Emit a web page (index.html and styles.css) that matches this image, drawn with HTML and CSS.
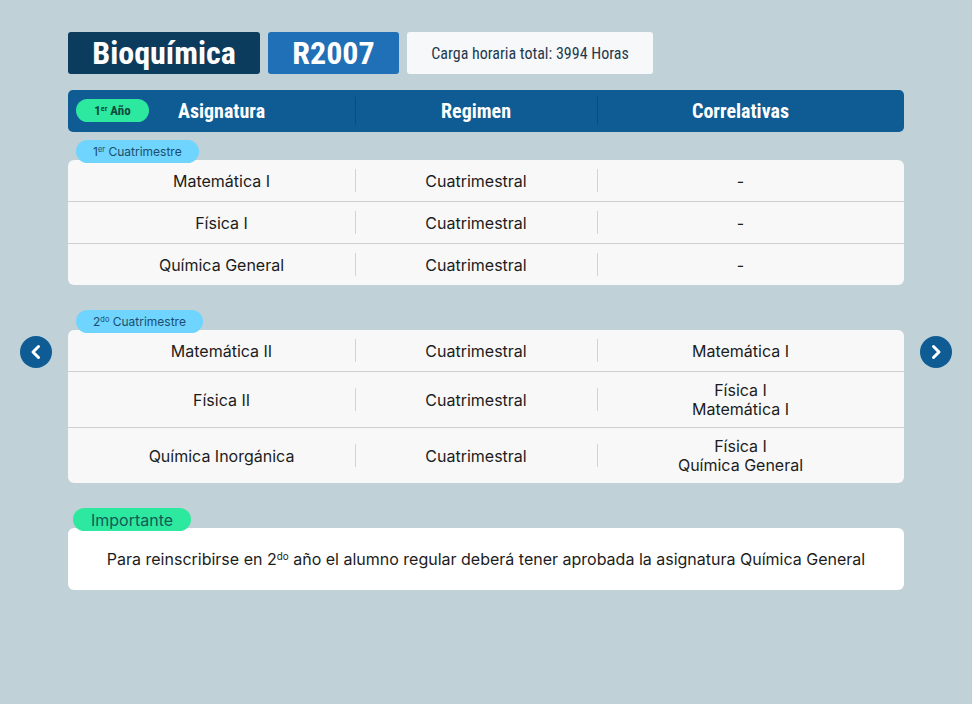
FILE: index.html
```html
<!DOCTYPE html>
<html lang="es">
<head>
<meta charset="utf-8">
<title>Bioquímica R2007</title>
<link rel="stylesheet" href="styles.css">
</head>
<body>
<button class="nav nav-prev" aria-label="Anterior">
  <svg width="32" height="32" viewBox="0 0 32 32"><path d="M18.5 10.5 L13 16 L18.5 21.5" fill="none" stroke="#fff" stroke-width="3" stroke-linecap="round" stroke-linejoin="round"/></svg>
</button>
<button class="nav nav-next" aria-label="Siguiente">
  <svg width="32" height="32" viewBox="0 0 32 32"><path d="M13.5 10.5 L19 16 L13.5 21.5" fill="none" stroke="#fff" stroke-width="3" stroke-linecap="round" stroke-linejoin="round"/></svg>
</button>
<main class="page">
  <div class="titles">
    <div class="title title-career">Bioquímica</div>
    <div class="title title-plan">R2007</div>
    <div class="title title-hours">Carga horaria total: 3994 Horas</div>
  </div>

  <div class="head">
    <span class="year-pill"><span>1<sup>er</sup> Año</span></span>
    <div class="grid head-grid">
      <div class="hcell">Asignatura</div>
      <div class="hcell sep">Regimen</div>
      <div class="hcell sep">Correlativas</div>
    </div>
  </div>

  <section class="term">
    <div class="term-pill"><span>1<sup>er</sup> Cuatrimestre</span></div>
    <div class="card">
      <div class="grid row"><div class="cell">Matemática I</div><div class="cell sep">Cuatrimestral</div><div class="cell sep">-</div></div>
      <div class="grid row"><div class="cell">Física I</div><div class="cell sep">Cuatrimestral</div><div class="cell sep">-</div></div>
      <div class="grid row"><div class="cell">Química General</div><div class="cell sep">Cuatrimestral</div><div class="cell sep">-</div></div>
    </div>
  </section>

  <section class="term">
    <div class="term-pill"><span>2<sup>do</sup> Cuatrimestre</span></div>
    <div class="card">
      <div class="grid row"><div class="cell">Matemática II</div><div class="cell sep">Cuatrimestral</div><div class="cell sep">Matemática I</div></div>
      <div class="grid row"><div class="cell">Física II</div><div class="cell sep">Cuatrimestral</div><div class="cell sep">Física I<br>Matemática I</div></div>
      <div class="grid row"><div class="cell">Química Inorgánica</div><div class="cell sep">Cuatrimestral</div><div class="cell sep">Física I<br>Química General</div></div>
    </div>
  </section>

  <section class="note">
    <div class="note-pill">Importante</div>
    <div class="note-card"><p class="note-text">Para reinscribirse en 2<sup>do</sup> año el alumno regular deberá tener aprobada la asignatura Química General</p></div>
  </section>
</main>
</body>
</html>
```

FILE: styles.css
```css
* { box-sizing: border-box; }
html, body { margin: 0; padding: 0; }
body {
  background: #c0d1d8;
  font-family: Inter, "Noto Sans", sans-serif;
  color: #1c1c1c;
  min-height: 704px;
}
.page {
  width: 836px;
  margin: 0 auto;
  padding-top: 32px;
}
.titles {
  display: flex;
  gap: 8px;
  height: 42px;
}
.title {
  display: flex;
  align-items: center;
  justify-content: center;
  border-radius: 3px;
  font-family: "Roboto Condensed", "Liberation Sans Narrow", Roboto, sans-serif;
  font-stretch: condensed;
}
.title-career {
  width: 192px;
  background: #0c3c5d;
  color: #fff;
  font-size: 32px;
  font-weight: 700;
}
.title-plan {
  width: 131px;
  background: #1f70b7;
  color: #fff;
  font-size: 32px;
  font-weight: 700;
}
.title-hours {
  width: 246px;
  background: #f7f8f9;
  color: #1f3a4f;
  font-size: 16px;
}
.head {
  position: relative;
  margin-top: 16px;
  height: 42px;
  background: #0e5c93;
  border-radius: 5px;
}
.grid {
  display: grid;
  grid-template-columns: 267px 242px 287px;
  padding: 0 20px;
}
.head-grid { height: 42px; }
.hcell {
  display: flex;
  align-items: center;
  justify-content: center;
  color: #fff;
  font-family: "Roboto Condensed", "Liberation Sans Narrow", Roboto, sans-serif;
  font-stretch: condensed;
  font-weight: 700;
  font-size: 20px;
}
.hcell.sep {
  background: linear-gradient(#0a4c7c, #0a4c7c) left center / 1px 28px no-repeat;
}
.year-pill {
  position: absolute;
  left: 8px;
  top: 9px;
  width: 73px;
  height: 23px;
  border-radius: 12px;
  background: #2de89f;
  color: #0c4a3c;
  font-family: "Roboto Condensed", "Liberation Sans Narrow", Roboto, sans-serif;
  font-stretch: condensed;
  font-weight: 700;
  font-size: 13px;
  display: flex;
  align-items: center;
  justify-content: center;
}
sup { font-size: 0.62em; line-height: 0; vertical-align: 0.55em; }
.term { margin-top: 8px; }
.term + .term { margin-top: 25px; }
.term-pill {
  position: relative;
  z-index: 1;
  display: flex;
  width: fit-content;
  align-items: center;
  height: 23px;
  margin-left: 8px;
  margin-bottom: -3px;
  padding: 0 17px;
  border-radius: 12px;
  background: #6fd4fe;
  color: #1d4d6c;
  font-size: 12px;
}
.card {
  background: #f8f8f8;
  border-radius: 6px;
  overflow: hidden;
}
.row {
  min-height: 42px;
  border-bottom: 1px solid #cfcfcf;
}
.row:last-child { border-bottom: 0; min-height: 41px; }
.cell {
  display: flex;
  align-items: center;
  justify-content: center;
  text-align: center;
  padding: 9px 0 8px;
  font-size: 16px;
  line-height: 19px;
}
.cell.sep {
  background: linear-gradient(#d3d3d3, #d3d3d3) left center / 1px 23px no-repeat;
}
.note { margin-top: 25px; }
.note-pill {
  position: relative;
  z-index: 1;
  display: flex;
  width: fit-content;
  align-items: center;
  height: 23px;
  margin-left: 5px;
  margin-bottom: -3px;
  padding: 0 18px;
  border-radius: 12px;
  background: #2de89f;
  color: #165a57;
  font-size: 16px;
}
.note-card {
  height: 62px;
  background: #fff;
  border-radius: 6px;
  display: flex;
  align-items: center;
  justify-content: center;
}
.note-text {
  margin: 0;
  font-size: 16px;
}
.nav {
  position: fixed;
  top: 336px;
  width: 32px;
  height: 32px;
  padding: 0;
  border: 0;
  border-radius: 50%;
  background: #0e5c93;
  display: flex;
  align-items: center;
  justify-content: center;
}
.nav-prev { left: 20px; }
.nav-next { left: 920px; }
```
